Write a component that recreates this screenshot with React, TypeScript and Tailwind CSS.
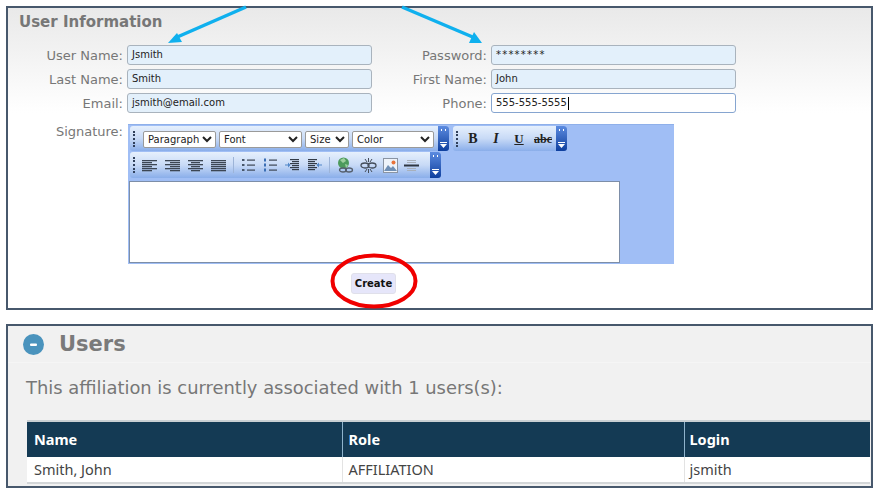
import React from 'react'

const sans = "font-['DejaVu_Sans',sans-serif]"

// one labelled input cell, the label is right aligned against the field
function Field({ label, value, labelWidth, active, spaced }: { label: string; value: string; labelWidth: string; active?: boolean; spaced?: boolean }) {
  return (
    <div className="flex items-center gap-[4px]">
      <span className={`${labelWidth} text-right text-[13px] leading-none text-[#777]`}>{label}</span>
      <div
        className={`flex h-[20px] w-[245px] items-center rounded-[3px] border px-[4px] text-[10px] leading-none text-[#222] ${
          active ? 'border-[#86a5d0] bg-white text-[10.5px]' : 'border-[#a9b3bd] bg-[#e3f0fb]'
        } ${spaced ? 'tracking-[1.2px]' : ''}`}
      >
        {value}
        {active && <span className="ml-[1px] h-[13px] w-px bg-black" />}
      </div>
    </div>
  )
}

function Grip() {
  return <span className="mx-[3px] h-[16px] w-0 shrink-0 border-l-2 border-dotted border-[#30405c]" />
}

function Overflow() {
  return (
    <span className="ml-auto flex h-full w-[11px] shrink-0 flex-col items-center justify-between rounded-r-[3px] bg-gradient-to-b from-[#5c8be0] to-[#0e3f9e] py-[3px]">
      <svg width="7" height="4" viewBox="0 0 7 4"><path d="M1 0h1v2H1zM5 0h1v2H5z" fill="#fff" /></svg>
      <svg width="7" height="6" viewBox="0 0 7 6"><path d="M0 0h7v1H0zM0 2h7L3.500 6z" fill="#fff" /></svg>
    </span>
  )
}

function Bar({ size, children }: { size: string; children: React.ReactNode }) {
  return (
    <div className={`flex ${size} items-center rounded-[3px] bg-gradient-to-b from-[#e6f0fd] via-[#c8daf6] to-[#8aaeea]`}>
      {children}
      <Overflow />
    </div>
  )
}

function Select({ width, value }: { width: string; value: string }) {
  return (
    <select
      defaultValue={value}
      className={`${width} h-[17px] rounded-[2px] border border-[#9a9a9a] bg-white text-[10px] leading-none text-[#222] ${sans}`}
    >
      <option>{value}</option>
    </select>
  )
}

// alignment style glyph, x/w pairs for each line
function Lines({ rows }: { rows: [number, number][] }) {
  return (
    <svg width="15" height="13" viewBox="0 0 15 13" className="shrink-0">
      {rows.map(([x, w], i) => (
        <rect key={i} x={x} y={i * 2 + 1} width={w} height="1.300" fill="#3c4654" />
      ))}
    </svg>
  )
}

function ListIcon({ numbered }: { numbered?: boolean }) {
  return (
    <svg width="15" height="14" viewBox="0 0 15 14" className="shrink-0">
      {[2, 7, 12].map(y => (
        <g key={y}>
          {numbered ? (
            <rect x="1" y={y - 1.500} width="2" height="3" fill="#3b6fb5" />
          ) : (
            <rect x="1" y={y - 1} width="2.500" height="2" fill="#47566a" />
          )}
          <rect x="6" y={y - 0.500} width="8" height="1.200" fill="#3c4654" />
        </g>
      ))}
    </svg>
  )
}

function IndentIcon({ flip }: { flip?: boolean }) {
  return (
    <svg width="15" height="14" viewBox="0 0 15 14" className="shrink-0">
      <g transform={flip ? 'translate(15 0) scale(-1 1)' : undefined}>
        {[1, 3, 5, 7, 9, 11].map((y, i) => (
          <rect key={y} x={i % 2 ? 7 : 5} y={y} width={i % 2 ? 7 : 9} height="1.200" fill="#333c48" />
        ))}
        <path d="M0 6.500h3V4.500l2.500 2.500L3 9.500v-2H0z" fill="#4f86c8" />
      </g>
    </svg>
  )
}

function Sep() {
  return <span className="h-[16px] w-px shrink-0 bg-[#9db4d8]" />
}

export default function App() {
  return (
    <div className={`relative h-[490px] w-[877px] overflow-hidden bg-white pl-[6px] pr-[4px] pt-[6px] ${sans}`}>
      {/* first panel */}
      <section className="h-[304px] border-2 border-[#47586c] bg-gradient-to-b from-[#e9e9e9] via-white via-[35%] to-white">
        <h2 className="pl-[11px] pt-[5px] text-[15px] leading-[18px] font-bold text-[#777]">User Information</h2>

        <div className="mt-[14px] flex flex-col gap-[4px] pl-[2px]">
          <div className="flex gap-[29px]">
            <Field label="User Name:" value="Jsmith" labelWidth="w-[113px]" />
            <Field label="Password:" value="********" labelWidth="w-[86px]" spaced />
          </div>
          <div className="flex gap-[29px]">
            <Field label="Last Name:" value="Smith" labelWidth="w-[113px]" />
            <Field label="First Name:" value="John" labelWidth="w-[86px]" />
          </div>
          <div className="flex gap-[29px]">
            <Field label="Email:" value="jsmith@email.com" labelWidth="w-[113px]" />
            <Field label="Phone:" value="555-555-5555" labelWidth="w-[86px]" active />
          </div>
        </div>

        <div className="mt-[11px] flex gap-[5px] pl-[2px]">
          <span className="w-[113px] pt-[1px] text-right text-[13px] leading-[14px] text-[#777]">Signature:</span>
          <div className="flex h-[140px] w-[546px] flex-col border-t border-[#8fb0ea] bg-[#a0bef5] pl-[2px] pt-[1px]">
            <div className="flex gap-[4px]">
              <Bar size="h-[25px] w-[319px]">
                <Grip />
                <div className="ml-[5px] flex gap-[3px] pt-[1px]">
                  <Select width="w-[73px]" value="Paragraph" />
                  <Select width="w-[83px]" value="Font" />
                  <Select width="w-[44px]" value="Size" />
                  <Select width="w-[82px]" value="Color" />
                </div>
              </Bar>
              <Bar size="h-[25px] w-[114px]">
                <Grip />
                <div className="ml-[4px] flex items-center gap-[7px] font-['Liberation_Serif',serif] text-[#222]">
                  <span className="w-[16px] text-center text-[14px] font-bold">B</span>
                  <span className="w-[16px] text-center text-[14px] font-bold italic">I</span>
                  <span className="w-[16px] text-center text-[13px] font-bold underline">U</span>
                  <span className="w-[18px] text-center text-[12px] font-bold line-through">abc</span>
                </div>
              </Bar>
            </div>
            <div className="mt-[1px]">
              <Bar size="h-[26px] w-[311px]">
                <Grip />
                <div className="ml-[4px] flex items-center gap-[7px]">
                  <div className="flex items-center gap-[8px]">
                    <Lines rows={[[0, 15], [0, 10], [0, 15], [0, 10], [0, 15], [0, 10]]} />
                    <Lines rows={[[0, 15], [5, 10], [0, 15], [5, 10], [0, 15], [5, 10]]} />
                    <Lines rows={[[0, 15], [3, 9], [0, 15], [3, 9], [0, 15], [3, 9]]} />
                    <Lines rows={[[0, 15], [0, 15], [0, 15], [0, 15], [0, 15], [0, 15]]} />
                  </div>
                  <Sep />
                  <div className="flex items-center gap-[7px]">
                    <ListIcon />
                    <ListIcon numbered />
                    <IndentIcon />
                    <IndentIcon flip />
                  </div>
                  <Sep />
                  <div className="flex items-center gap-[6px]">
                    <svg width="17" height="17" viewBox="0 0 17 17" className="shrink-0">
                      <circle cx="6.500" cy="6" r="5.500" fill="#4d9a5c" />
                      <path d="M3 3l4-2 2 3-3 2zM8 7l3 1-2 3z" fill="#9fd09f" />
                      <ellipse cx="6" cy="13" rx="3.500" ry="2" fill="none" stroke="#555f6d" strokeWidth="1.300" />
                      <ellipse cx="12" cy="13" rx="3.500" ry="2" fill="none" stroke="#555f6d" strokeWidth="1.300" />
                    </svg>
                    <svg width="17" height="15" viewBox="0 0 17 15" className="shrink-0">
                      <ellipse cx="5" cy="7.500" rx="4" ry="2.500" fill="none" stroke="#444d5a" strokeWidth="1.300" />
                      <ellipse cx="12" cy="7.500" rx="4" ry="2.500" fill="none" stroke="#444d5a" strokeWidth="1.300" />
                      <path d="M5 1l2 3M8.500 0v4M12 1l-2 3M5 14l2-3M8.500 15v-4M12 14l-2-3" stroke="#444d5a" strokeWidth="1" />
                    </svg>
                    <svg width="15" height="15" viewBox="0 0 15 15" className="shrink-0">
                      <rect x="0.500" y="0.500" width="14" height="14" fill="#eef3fa" stroke="#8a94a3" />
                      <path d="M1 13l4-6 3 3 2-2 4 5z" fill="#6f8fb5" />
                      <circle cx="10.500" cy="4.500" r="2" fill="#e8733a" />
                    </svg>
                    <svg width="15" height="13" viewBox="0 0 15 13" className="shrink-0">
                      <path d="M3 1h9v1H3zM3 3h9v1H3zM3 9h9v1H3zM3 11h9v1H3z" fill="#a8b0bb" />
                      <rect x="0" y="5.500" width="15" height="2" fill="#2f3742" />
                    </svg>
                  </div>
                </div>
              </Bar>
            </div>
            <div className="-ml-[1px] mt-[3px] h-[82px] w-[491px] border border-[#7d8ea8] bg-white" />
          </div>
        </div>

        <div className="mt-[9px] flex justify-center pr-[132px]">
          <button className="h-[21px] w-[45px] rounded-[3px] border border-[#e0e0ea] bg-[#e6e6fa] text-[10px] font-bold text-[#111]">Create</button>
        </div>
      </section>

      {/* second panel */}
      <section className="mt-[14px] h-[164px] border-2 border-[#47586c] bg-[#f1f1f1]">
        <div className="flex h-[37px] items-center gap-[15px] border-b border-[#f5f5f5] pl-[15px]">
          <svg width="21" height="21" viewBox="0 0 21 21" className="shrink-0">
            <circle cx="10.500" cy="10.500" r="10.500" fill="#4a93bd" />
            <rect x="7" y="9.500" width="7" height="2.500" rx="1" fill="#fff" />
          </svg>
          <h2 className="text-[21px] leading-none font-bold text-[#7a7a7a]">Users</h2>
        </div>
        <p className="mt-[15px] pl-[18px] text-[17.9px] leading-[20px] text-[#777]">This affiliation is currently associated with 1 users(s):</p>

        <table className="mt-[22px] ml-[19px] w-[843px] table-fixed border-collapse border-t-2 border-[#c9cfd3] font-['Noto_Sans',sans-serif] text-[14.5px]">
          <thead>
            <tr className="h-[36px] bg-[#143a54] text-left text-white">
              <th className="w-[315px] border-r border-[#8fb3cc] pl-[7px] font-bold">Name</th>
              <th className="w-[342px] border-r border-[#8fb3cc] pl-[6px] font-bold">Role</th>
              <th className="pl-[5px] font-bold">Login</th>
            </tr>
          </thead>
          <tbody>
            <tr className="h-[26px] border-b-2 border-[#d3d6d8] bg-white text-[#444]">
              <td className="border-r border-[#e3e3e3] pl-[7px]">Smith, John</td>
              <td className="border-r border-[#e3e3e3] pl-[6px]">AFFILIATION</td>
              <td className="pl-[5px]">jsmith</td>
            </tr>
          </tbody>
        </table>
      </section>

      {/* annotations drawn over the page */}
      <svg width="877" height="490" viewBox="0 0 877 490" className="pointer-events-none absolute left-0 top-0">
        <path d="M246 7L175 38" stroke="#0fb0ee" strokeWidth="3.500" fill="none" />
        <path d="M168 43l9-10 5 9z" fill="#0fb0ee" />
        <path d="M402 7L475 38" stroke="#0fb0ee" strokeWidth="3.500" fill="none" />
        <path d="M482 43l-13 0 5-11z" fill="#0fb0ee" />
        <ellipse cx="374" cy="281" rx="41.500" ry="25.500" fill="none" stroke="#f00000" strokeWidth="4" />
      </svg>
    </div>
  )
}
